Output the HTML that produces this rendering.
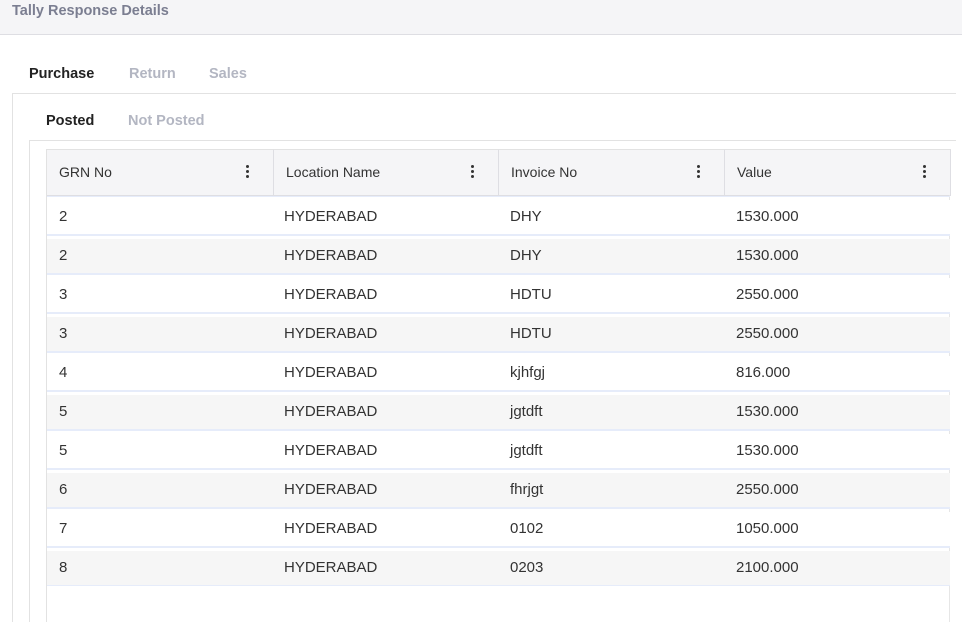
<!DOCTYPE html>
<html><head><style>
*{margin:0;padding:0;box-sizing:border-box}
body{width:962px;height:635px;background:#fff;font-family:"Liberation Sans",sans-serif;position:relative;overflow:hidden}
.hdr{position:absolute;left:0;top:0;width:962px;height:35px;background:#f5f5f7;border-bottom:1px solid #dedee3}
.hdr span{position:absolute;left:12px;top:3px;font-size:14.5px;color:#7b7e91;font-weight:bold}
.t{position:absolute;font-size:14.5px;font-weight:bold}
.box1{position:absolute;left:12px;top:93px;width:944px;height:529px;border-left:1px solid #e2e2e2;border-top:1px solid #e2e2e2}
.box2{position:absolute;left:29px;top:140px;width:927px;height:482px;border-left:1px solid #e2e2e2;border-top:1px solid #e2e2e2}
.tbl{position:absolute;left:46px;top:149px;width:904px;height:473px;border-left:1px solid #e2e2e2}
.th{position:absolute;top:0;height:47px;background:#f5f5f7;border-top:1px solid #e2e2e2;border-bottom:1px solid #dedee3;border-right:1px solid #dedee3;font-size:14px;color:#333;line-height:45px;padding-left:12px}
.dots{position:absolute;right:24px;top:15px;width:3px}
.dots i{display:block;width:3px;height:3px;border-radius:50%;background:#333;margin-bottom:2px}
.row{position:absolute;left:0;width:903px;height:34px;font-size:15px;color:#333}
.row span{position:absolute;top:8px}
.sep{position:absolute;left:0;width:903px;height:1px;background:#e6ecfa}
</style></head><body>
<div class="hdr"><span>Tally Response Details</span></div>
<div class="t" style="left:29px;top:66px;color:#222">Purchase</div>
<div class="t" style="left:129px;top:66px;color:#b3b6c2">Return</div>
<div class="t" style="left:209px;top:66px;color:#b3b6c2">Sales</div>
<div class="box1"></div>
<div class="t" style="left:46px;top:113px;color:#222">Posted</div>
<div class="t" style="left:128px;top:113px;color:#b3b6c2">Not Posted</div>
<div class="box2"></div>
<div class="tbl">
<div class="th" style="left:0;width:227px">GRN No<div class="dots"><i></i><i></i><i></i></div></div>
<div class="th" style="left:227px;width:225px">Location Name<div class="dots"><i></i><i></i><i></i></div></div>
<div class="th" style="left:452px;width:226px">Invoice No<div class="dots"><i></i><i></i><i></i></div></div>
<div class="th" style="left:678px;width:226px">Value<div class="dots"><i></i><i></i><i></i></div></div>
</div>
<div style="position:absolute;left:949px;top:195px;width:1px;height:427px;background:#e6e6e6"></div>
<div id="rows" style="position:absolute;left:47px;top:0"></div>
<script>
var d=[["2","DHY","1530.000"],["2","DHY","1530.000"],["3","HDTU","2550.000"],["3","HDTU","2550.000"],["4","kjhfgj","816.000"],["5","jgtdft","1530.000"],["5","jgtdft","1530.000"],["6","fhrjgt","2550.000"],["7","0102","1050.000"],["8","0203","2100.000"]];
var h="";
d.forEach(function(r,i){var y=200+i*39;
h+='<div class="row" style="top:'+y+'px;background:'+(i%2?'#f6f6f6':'#fff')+'"><span style="left:12px">'+r[0]+'</span><span style="left:237px">HYDERABAD</span><span style="left:463px">'+r[1]+'</span><span style="left:689px">'+r[2]+'</span></div>';
h+='<div class="sep" style="top:'+(y-4)+'px"></div><div class="sep" style="top:'+(y+34)+'px"></div>';});
document.getElementById("rows").innerHTML=h;
</script>
</body></html>
